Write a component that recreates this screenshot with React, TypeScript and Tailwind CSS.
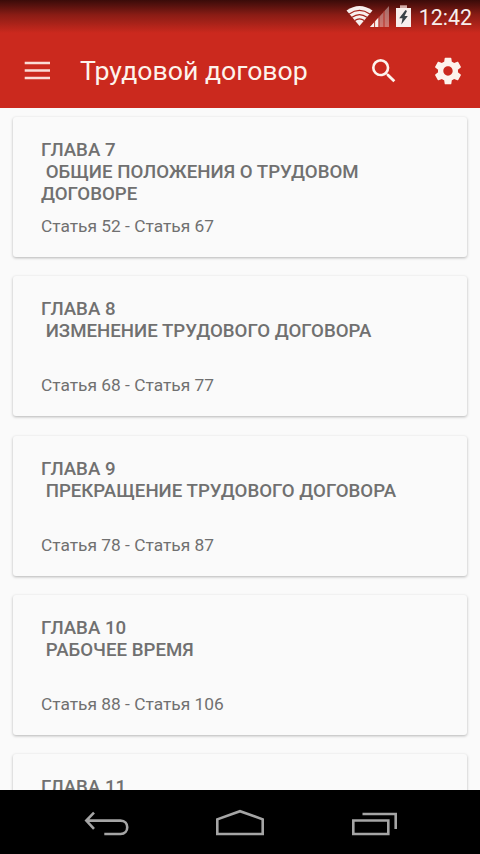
const chapters = [
  { title: 'ГЛАВА 7', name: 'ОБЩИЕ ПОЛОЖЕНИЯ О ТРУДОВОМ ДОГОВОРЕ', articles: 'Статья 52 - Статья 67' },
  { title: 'ГЛАВА 8', name: 'ИЗМЕНЕНИЕ ТРУДОВОГО ДОГОВОРА', articles: 'Статья 68 - Статья 77' },
  { title: 'ГЛАВА 9', name: 'ПРЕКРАЩЕНИЕ ТРУДОВОГО ДОГОВОРА', articles: 'Статья 78 - Статья 87' },
  { title: 'ГЛАВА 10', name: 'РАБОЧЕЕ ВРЕМЯ', articles: 'Статья 88 - Статья 106' },
]

function StatusBar() {
  return (
    <div className="flex h-[33px] items-start justify-end bg-linear-to-b from-[#3a0b09] via-[#8a1c15] via-45% to-[#cb291e] pr-2 text-[#f8efed]">
      <svg className="mt-[6px] h-5 w-[27px]" viewBox="0 0 27 20">
        <path d="M13.5 20 .5 4.6Q13.5-4.4 26.5 4.6Z" fill="currentColor" />
        <path
          d="M3.2 8Q13.5.8 23.8 8M6 11.3Q13.5 6 21 11.3M8.8 14.6Q13.5 11.2 18.2 14.6"
          fill="none"
          stroke="#a52018"
          strokeWidth="1.2"
        />
      </svg>
      <svg className="-ml-[3px] mt-[5px] h-[22px] w-5" viewBox="0 0 20 22">
        <path d="M0 22 19 1V22Z" fill="#fff" opacity=".38" />
        <path d="M0 22 8.5 12.6V22Z" fill="currentColor" />
        <path d="M4.6 16V22M9 11V22M14 6V22" stroke="#b5241b" strokeWidth=".9" />
      </svg>
      <svg className="ml-[6px] mt-[5px] h-[22px] w-[15px]" viewBox="0 0 15 22">
        <path d="M4 .3H11V3H4Z" fill="#d3aca8" />
        <path d="M0 3H15V22H0Z" fill="currentColor" />
        <path d="M9.5 5 3.2 13.3H6.5L5.3 19.5 11.8 11H8.5L11 6Z" fill="#3b4247" />
      </svg>
      <span className="ml-[8px] mt-[5px] text-[21.4px] leading-[26px]">12:42</span>
    </div>
  )
}

function Toolbar() {
  return (
    <div className="flex h-[75px] items-center pb-[1px] text-[#fdf3ec]">
      <svg className="ml-[21px] h-8 w-8" viewBox="0 0 32 32" fill="none" stroke="#fbdcd6" strokeWidth="2.6">
        <path d="M3.7 9H29M3.7 16.5H29M3.7 24H29" />
      </svg>
      <h1 className="ml-[27px] mt-[2px] flex-1 whitespace-nowrap text-[26.67px] leading-8">Трудовой договор</h1>
      <svg className="mr-8 mt-[1px] h-8 w-8" viewBox="0 0 24 24" fill="currentColor">
        <path d="M15.5 14h-.79l-.28-.27A6.471 6.471 0 0 0 16 9.5 6.5 6.5 0 1 0 9.5 16c1.61 0 3.09-.59 4.23-1.57l.27.28v.79l5 4.99L20.49 19l-4.99-5zm-6 0C7.01 14 5 11.99 5 9.5S7.01 5 9.5 5 14 7.01 14 9.5 11.99 14 9.5 14z" />
      </svg>
      <svg className="mr-4 mt-[1px] h-8 w-8" viewBox="0 0 24 24" fill="currentColor">
        <path d="M19.43 12.98c.04-.32.07-.64.07-.98s-.03-.66-.07-.98l2.11-1.65c.19-.15.24-.42.12-.64l-2-3.46c-.12-.22-.39-.3-.61-.22l-2.49 1c-.52-.4-1.08-.73-1.69-.98l-.38-2.65C14.46 2.18 14.25 2 14 2h-4c-.25 0-.46.18-.49.42l-.38 2.65c-.61.25-1.17.59-1.69.98l-2.49-1c-.23-.09-.49 0-.61.22l-2 3.46c-.13.22-.07.49.12.64l2.11 1.65c-.04.32-.07.65-.07.98s.03.66.07.98l-2.11 1.65c-.19.15-.24.42-.12.64l2 3.46c.12.22.39.3.61.22l2.49-1c.52.4 1.08.73 1.69.98l.38 2.65c.03.24.24.42.49.42h4c.25 0 .46-.18.49-.42l.38-2.65c.61-.25 1.17-.59 1.69-.98l2.49 1c.23.09.49 0 .61-.22l2-3.46c.12-.22.07-.49-.12-.64l-2.11-1.65zM12 15.5c-1.93 0-3.5-1.57-3.5-3.5s1.57-3.5 3.5-3.5 3.5 1.57 3.5 3.5-1.57 3.5-3.5 3.5z" />
      </svg>
    </div>
  )
}

const card =
  'shrink-0 bg-[#fafafa] px-7 pt-[22px] text-[18.67px] leading-[22px] text-[#707070] shadow-[0_1px_3px_rgba(0,0,0,0.28)]'

function ChapterCard({ title, name, articles }: { title: string; name: string; articles: string }) {
  return (
    <div className={card + ' h-[140px] rounded-[3px]'}>
      <h2 className="h-[66px] whitespace-pre-wrap font-medium">{title + '\n ' + name}</h2>
      <p className="mt-[10px] text-[17.33px]">{articles}</p>
    </div>
  )
}

function NavigationBar() {
  return (
    <nav className="flex h-16 shrink-0 items-center justify-between bg-black px-[83px] text-[#a5a5a5]">
      <svg className="h-7 w-12" viewBox="0 0 48 28" fill="none" stroke="currentColor" strokeWidth="2.6">
        <path d="M2.8 12.6H37.5C46.5 12.6 46.5 26 37.5 26H21.3M11 4.7 3.3 12.6 11 20.9" />
      </svg>
      <svg className="h-7 w-[50px]" viewBox="0 0 50 28" fill="none" stroke="currentColor" strokeWidth="2.6">
        <path d="M2.3 26V11.3L25 3.2 47.7 11.3V26Z" />
      </svg>
      <svg className="h-7 w-12" viewBox="0 0 48 28" fill="none" stroke="currentColor" strokeWidth="2.6">
        <path d="M4.3 12.5H39.3V26H4.3ZM13.5 6H46.7V21" />
      </svg>
    </nav>
  )
}

export default function App() {
  return (
    <div className="flex h-[854px] w-[480px] flex-col overflow-hidden bg-[#fafafa] font-['Roboto',sans-serif]">
      <header className="shrink-0 bg-[#cb291e]">
        <StatusBar />
        <Toolbar />
      </header>
      <main className="flex min-h-0 flex-1 flex-col gap-[19.3px] overflow-hidden px-[13px] pt-[9px]">
        {chapters.map((chapter) => (
          <ChapterCard key={chapter.title} {...chapter} />
        ))}
        <div className={card + ' h-[60px] rounded-t-[3px]'}>
          <h2 className="font-medium">ГЛАВА 11</h2>
        </div>
      </main>
      <NavigationBar />
    </div>
  )
}
